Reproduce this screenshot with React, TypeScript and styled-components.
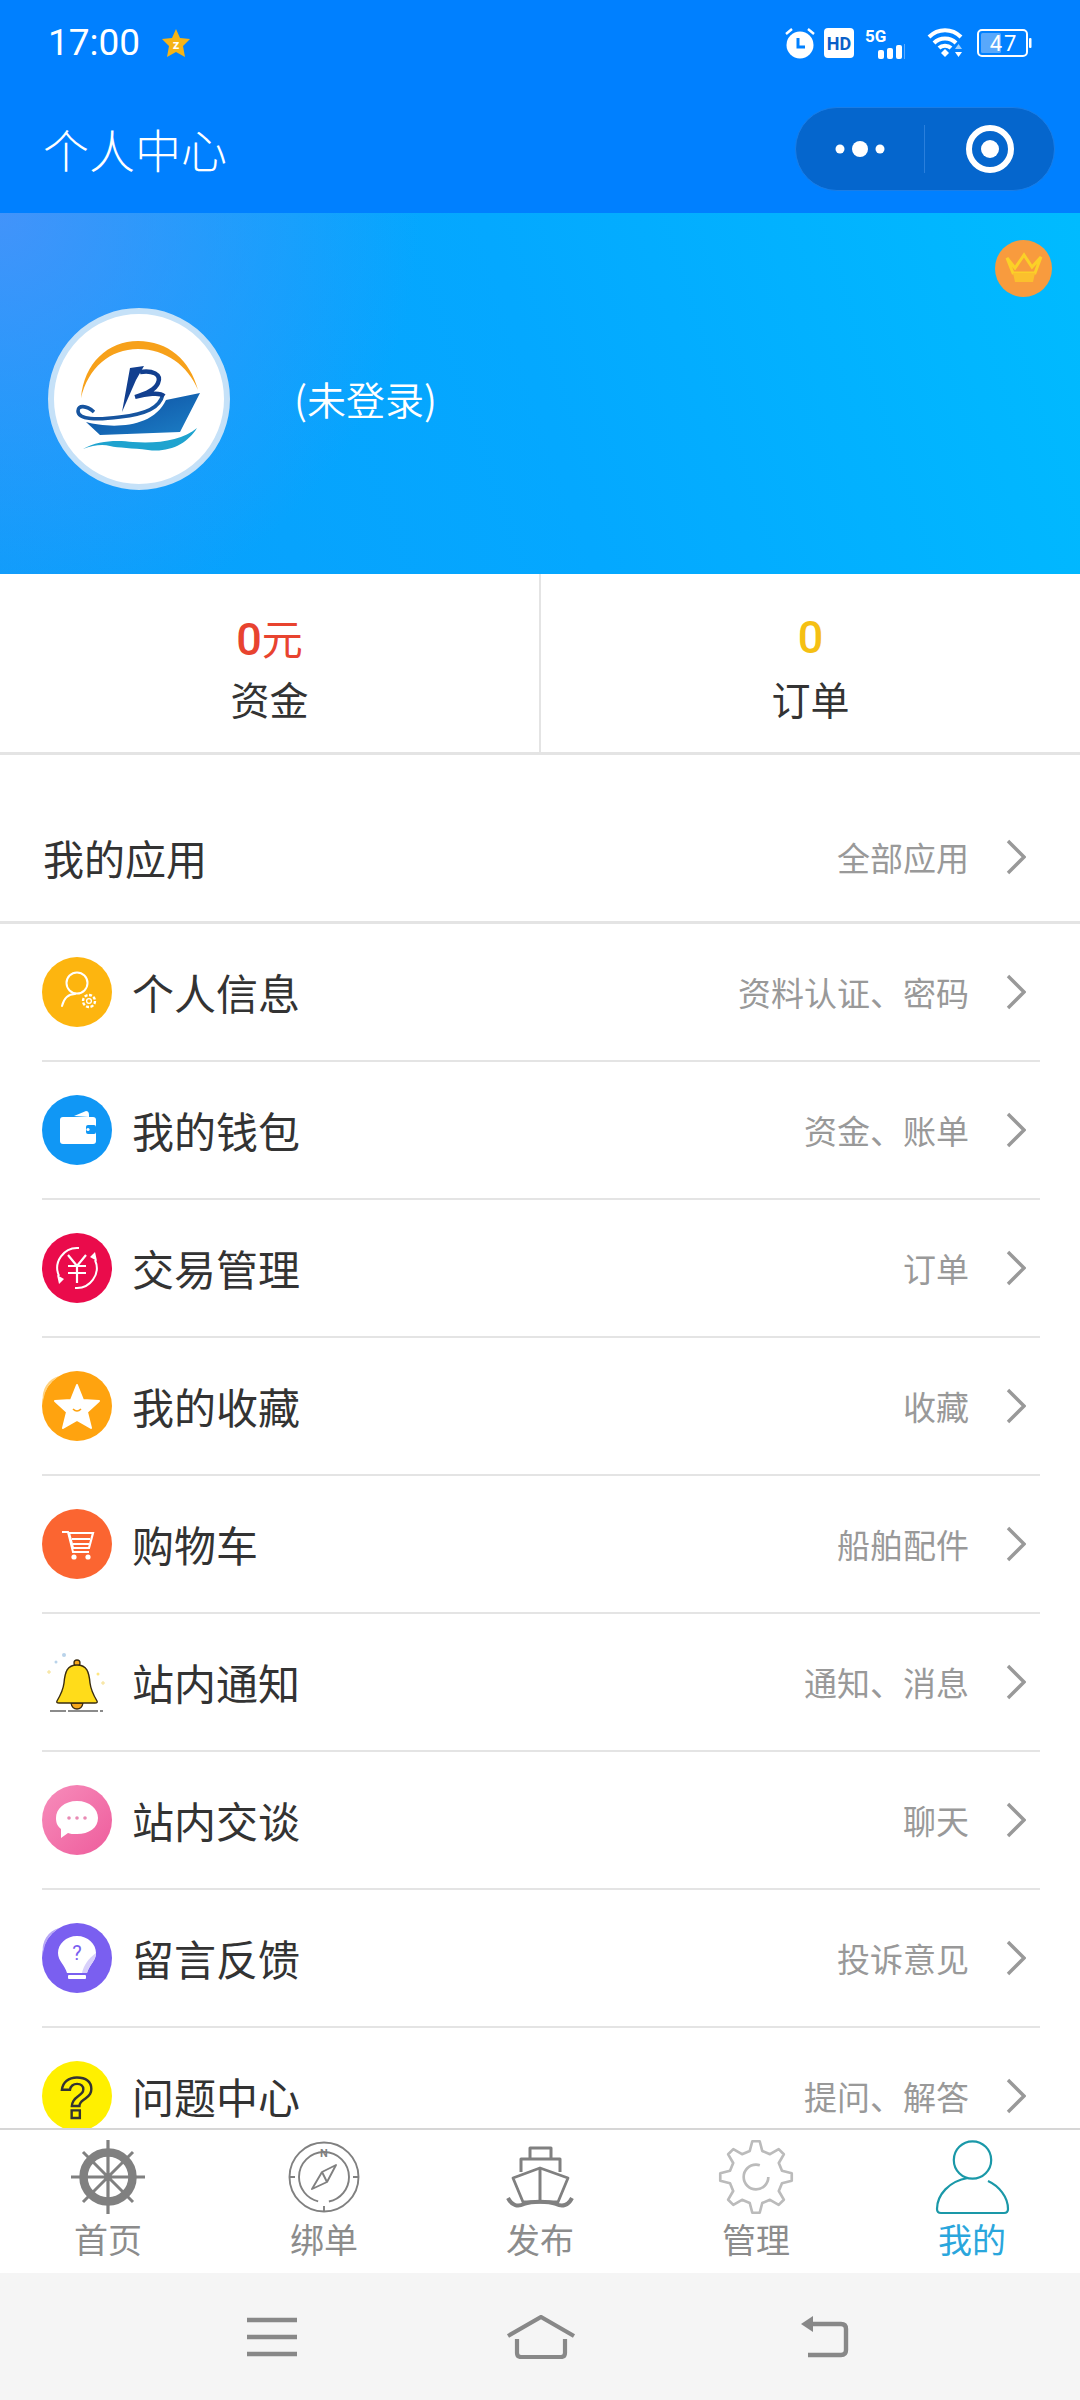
import React from 'react';
import styled, { createGlobalStyle } from 'styled-components';

const GlobalStyle = createGlobalStyle`
  html, body { margin: 0; padding: 0; background: #fff; }
  * { box-sizing: border-box; }
  body { font-family: "Noto Sans CJK SC", "Noto Sans", sans-serif; }
`;

const Page = styled.div`
  width: 1080px; height: 2400px; display: flex; flex-direction: column; overflow: hidden; background: #fff;
`;
const Top = styled.header`
  height: 213px; flex: none; background: #0080ff; color: #fff; display: flex; flex-direction: column;
`;
const StatusBar = styled.div`
  height: 85px; padding: 0 48px; display: flex; align-items: center; justify-content: space-between;
`;
const StatusLeft = styled.div`
  display: flex; align-items: center; gap: 21px;
`;
const Time = styled.span`
  font-family: Roboto, "Liberation Sans", sans-serif; font-size: 37px; font-weight: 400; line-height: 1;
`;
const StatusRight = styled.div`
  display: flex; align-items: center;
`;
const StatusGlyph = styled.svg<{ $ml?: number }>`
  display: block; flex: none; margin-left: ${p => p.$ml ?? 0}px;
`;
const NavBar = styled.div`
  height: 128px; padding: 0 25px 0 43px; display: flex; align-items: center; justify-content: space-between;
`;
const NavTitle = styled.h1`
  margin: -2px 0 0; font-size: 46px; font-weight: 300; line-height: 1;
`;
const Capsule = styled.div`
  width: 260px; height: 84px; border-radius: 42px; background: #0566cd; border: 1px solid #1a7de6;
  display: grid; grid-template-columns: 128px 1px 1fr; align-items: center; justify-items: center;
`;
const CapsuleDivider = styled.i`
  display: block; width: 1px; height: 48px; background: #2a7fdc;
`;
const Hero = styled.section`
  height: 361px; flex: none; position: relative; display: flex; align-items: center; padding: 11px 0 0 48px; gap: 64px;
  background:
    radial-gradient(circle at 0 0, rgba(72, 146, 250, 0.9) 0, rgba(72, 146, 250, 0) 420px),
    linear-gradient(72deg, #0a9efb 0%, #04a8ff 50%, #00bbff 100%);
`;
const Avatar = styled.div`
  width: 182px; height: 182px; border-radius: 50%; background: #fff; border: 6px solid #c5e1f8; flex: none;
  display: flex; align-items: center; justify-content: center; overflow: hidden;
`;
const LoginText = styled.span`
  color: #fff; font-size: 39px; font-weight: 350; line-height: 1; margin-top: -1px;
`;
const Crown = styled.svg`
  position: absolute; right: 28px; top: 27px;
`;
const Stats = styled.section`
  height: 181px; flex: none; display: grid; grid-template-columns: 1fr 2px 1fr; border-bottom: 3px solid #e4e4e4;
`;
const StatDivider = styled.i`
  display: block; background: #e4e4e4;
`;
const Stat = styled.div`
  display: flex; flex-direction: column; align-items: center; padding-top: 33px;
`;
const StatValue = styled.div<{ $color: string }>`
  color: ${p => p.$color}; height: 61px; line-height: 61px; font-size: 45px; font-weight: 500; font-family: Roboto, "Noto Sans CJK SC", sans-serif;
  span { font-size: 41px; font-weight: 400; font-family: "Noto Sans CJK SC", sans-serif; }
`;
const StatLabel = styled.div`
  color: #333; height: 61px; line-height: 61px; font-size: 39px; font-weight: 400;
`;
const Scroll = styled.main`
  flex: 1; min-height: 0; overflow: hidden; background: #fff;
`;
const AppsHeader = styled.div`
  height: 169px; padding: 38px 54px 0 43px; display: flex; align-items: center; justify-content: space-between;
  border-bottom: 3px solid #e4e4e4;
`;
const AppsTitle = styled.span`
  font-size: 41px; color: #333; line-height: 1;
`;
const Right = styled.div`
  display: flex; align-items: center; gap: 37px; flex: none;
`;
const Sub = styled.span`
  font-size: 33px; color: #999; line-height: 1; font-weight: 400;
`;
const Row = styled.div`
  height: 138px; margin: 0 40px 0 42px; padding-right: 14px; display: flex; align-items: center;
  border-bottom: 2px solid #e4e4e4;
`;
const RowIcon = styled.svg`
  display: block; flex: none; width: 70px; height: 70px;
`;
const RowTitle = styled.span`
  flex: 1; margin-left: 20px; font-size: 42px; color: #333; line-height: 1;
`;
const TabBar = styled.nav`
  height: 145px; flex: none; display: grid; grid-template-columns: repeat(5, 216px); background: #fff; border-top: 2px solid #d6d6d6;
`;
const Tab = styled.div`
  display: flex; flex-direction: column; align-items: center; padding-top: 9px;
`;
const TabLabel = styled.span<{ $active?: boolean }>`
  margin-top: 4px; font-size: 34px; line-height: 40px; font-weight: 400; color: ${p => (p.$active ? '#2aa6dc' : '#8c8c8c')};
`;
const SystemNav = styled.div`
  height: 127px; flex: none; background: #f5f5f5; display: flex; align-items: center; padding: 0 0 0 246px;
`;

const Chevron = () => (
  <svg width="20" height="36" viewBox="0 0 20 36" style={{ display: 'block' }}>
    <path d="M2 2 L18 18 L2 34" fill="none" stroke="#999" strokeWidth="3.4" />
  </svg>
);

const Logo = () => (
  <svg width="170" height="170" viewBox="6 6 170 170">
    <defs>
      <linearGradient id="hull" x1="0" y1="0" x2="1" y2="1">
        <stop offset="0" stopColor="#0c4a9e" />
        <stop offset="1" stopColor="#1c7fc6" />
      </linearGradient>
    </defs>
    <path d="M33 90 C36 55 60 33 90 33 C120 33 142 52 150 82 C140 58 118 41 90 41 C62 41 40 60 33 90Z" fill="#f7a11a" />
    <path d="M118 92 L152 85 L132 124 L52 127 L38 114 C60 120 104 122 118 92Z" fill="url(#hull)" />
    <path d="M115 86 C112 100 98 106 72 109 C50 112 30 112 30 103 C30 97 38 97 46 104" fill="none" stroke="#16549f" strokeWidth="3.6" />
    <path d="M82 60 L96 58 L88 72 L74 104Z" fill="#123f8f" />
    <path d="M92 64 C104 62 114 66 110 75 C107 82 98 86 87 89 C98 86 112 84 116 88" fill="none" stroke="#123f8f" strokeWidth="4.4" />
    <path d="M35 141 C50 132 70 132 85 134 C110 136 135 132 149 120 C140 135 122 145 100 142 C85 140 70 140 62 138 C55 136 45 137 35 141Z" fill="#1fa3cf" />
  </svg>
);

const UserIcon = () => (
  <RowIcon viewBox="0 0 70 70">
    <circle cx="35" cy="35" r="35" fill="#fdb50f" />
    <circle cx="35" cy="26" r="10.5" fill="none" stroke="#fff" strokeWidth="2" />
    <path d="M20 49 C22 41 27 37 33 37" fill="none" stroke="#fff" strokeWidth="2" strokeLinecap="round" />
    <circle cx="47" cy="44" r="6" fill="none" stroke="#fff" strokeWidth="2.4" strokeDasharray="3 1.6" />
    <circle cx="47" cy="44" r="2.4" fill="none" stroke="#fff" strokeWidth="1.3" />
  </RowIcon>
);
const WalletIcon = () => (
  <RowIcon viewBox="0 0 70 70">
    <circle cx="35" cy="35" r="35" fill="#1097f5" />
    <path d="M32 21 L44 16 Q47 16 47 20 L47 22Z" fill="#fff" />
    <rect x="18" y="22" width="36" height="27" rx="3" fill="#fff" />
    <rect x="44" y="30" width="10" height="9" rx="2" fill="#1097f5" />
    <circle cx="46" cy="34.5" r="1.6" fill="#fff" />
  </RowIcon>
);
const TradeIcon = () => (
  <RowIcon viewBox="0 0 70 70">
    <circle cx="35" cy="35" r="35" fill="#ea0b4b" />
    <path d="M53 27 A20 20 0 0 1 33 55 M17 43 A20 20 0 0 1 37 15" fill="none" stroke="#fff" strokeWidth="2" />
    <path d="M48 24 L53 19 L55 28Z M22 46 L17 51 L15 42Z" fill="#fff" />
    <path d="M26 22 L35 33 L44 22 M26 33 H44 M26 40 H44 M35 33 V50" fill="none" stroke="#fff" strokeWidth="2.2" />
  </RowIcon>
);
const StarIcon = () => (
  <RowIcon viewBox="0 0 70 70">
    <circle cx="35" cy="35" r="35" fill="#ffa30f" />
    <path d="M1 30 A35 35 0 0 1 17 5 A22 22 0 0 0 1 30Z" fill="#ffd27f" />
    <path d="M35 14 L41 29 L57 30 L45 41 L49 57 L35 49 L21 57 L25 41 L13 30 L29 29Z" fill="#fff" stroke="#fff" strokeWidth="2" strokeLinejoin="round" />
    <path d="M31 38 Q35 42 39 38" fill="none" stroke="#ffa30f" strokeWidth="1.6" />
  </RowIcon>
);
const CartIcon = () => (
  <RowIcon viewBox="0 0 70 70">
    <circle cx="35" cy="35" r="35" fill="#fb6531" />
    <path d="M20 23 H26 L31 43 H47" fill="none" stroke="#fff" strokeWidth="2" />
    <path d="M27 24 H51 L47 39 H31Z M30 30 H48 M31 35 H47" fill="none" stroke="#fff" strokeWidth="2.2" />
    <circle cx="32" cy="48" r="2.6" fill="#fff" />
    <circle cx="46" cy="48" r="2.6" fill="#fff" />
  </RowIcon>
);
const BellIcon = () => (
  <RowIcon viewBox="0 0 70 70">
    <circle cx="14" cy="15" r="1.5" fill="#b9d3ea" />
    <circle cx="22" cy="8" r="2" fill="#b9d3ea" />
    <path d="M5 25 h4 M7 23 v4" stroke="#f5df8c" strokeWidth="1" />
    <path d="M59 36 h4 M61 34 v4" stroke="#f5df8c" strokeWidth="1" />
    <circle cx="56" cy="27" r="1.5" fill="#ffe680" />
    <path d="M29 56 H41 Q40 62 35 62 Q30 62 29 56Z" fill="#f6a81c" stroke="#3a2c10" strokeWidth="1.3" />
    <circle cx="35" cy="16" r="3" fill="#f6a81c" stroke="#3a2c10" strokeWidth="1.3" />
    <path d="M35 18 C45 18 47 25 48 36 C49 44 52 49 55 54 Q56 56 53 56 H17 Q14 56 15 54 C18 49 21 44 22 36 C23 25 25 18 35 18Z" fill="#ffdc1a" stroke="#3a2c10" strokeWidth="1.4" />
    <path d="M8 64 H61" stroke="#666" strokeWidth="1.4" strokeDasharray="16 2 30 2" />
  </RowIcon>
);
const ChatIcon = () => (
  <RowIcon viewBox="0 0 70 70">
    <defs>
      <linearGradient id="pink" x1="0" y1="0" x2="1" y2="1">
        <stop offset="0" stopColor="#f78dbb" />
        <stop offset="1" stopColor="#ee5c9c" />
      </linearGradient>
    </defs>
    <circle cx="35" cy="35" r="35" fill="url(#pink)" />
    <path d="M35 16 C48 16 56 24 56 33 C56 43 47 49 35 49 C31 49 28 49 26 48 L19 53 L19 44 C15 41 14 37 14 33 C14 24 22 16 35 16Z" fill="#fff" />
    <circle cx="27" cy="33" r="1.8" fill="#e98ab4" />
    <circle cx="35" cy="33" r="1.8" fill="#e98ab4" />
    <circle cx="43" cy="33" r="1.8" fill="#e98ab4" />
  </RowIcon>
);
const BulbIcon = () => (
  <RowIcon viewBox="0 0 70 70">
    <circle cx="35" cy="35" r="35" fill="#7a5ff0" />
    <path d="M1 30 A35 35 0 0 1 17 5 A22 22 0 0 0 1 30Z" fill="#b8a8f6" />
    <path d="M35 13 C46 13 54 21 54 30 C54 38 47 42 45 50 H25 C23 42 16 38 16 30 C16 21 24 13 35 13Z" fill="#fff" />
    <path d="M54 30 C54 38 47 42 45 50 H40 C42 42 46 36 54 30Z" fill="#d8d0fa" />
    <rect x="26" y="52" width="18" height="4" rx="1" fill="#fff" />
    <text x="35" y="37" textAnchor="middle" fontSize="20" fontFamily="Roboto, sans-serif" fill="#7a5ff0">?</text>
  </RowIcon>
);
const QuestionIcon = () => (
  <RowIcon viewBox="0 0 70 70">
    <circle cx="35" cy="35" r="35" fill="#fff000" />
    <text x="35" y="57" textAnchor="middle" fontSize="58" fontWeight="700" fontFamily="Liberation Sans, sans-serif" fill="#fff000" stroke="#333" strokeWidth="2.4">?</text>
  </RowIcon>
);

const rows = [
  { title: '个人信息', sub: '资料认证、密码', icon: <UserIcon /> },
  { title: '我的钱包', sub: '资金、账单', icon: <WalletIcon /> },
  { title: '交易管理', sub: '订单', icon: <TradeIcon /> },
  { title: '我的收藏', sub: '收藏', icon: <StarIcon /> },
  { title: '购物车', sub: '船舶配件', icon: <CartIcon /> },
  { title: '站内通知', sub: '通知、消息', icon: <BellIcon /> },
  { title: '站内交谈', sub: '聊天', icon: <ChatIcon /> },
  { title: '留言反馈', sub: '投诉意见', icon: <BulbIcon /> },
  { title: '问题中心', sub: '提问、解答', icon: <QuestionIcon /> },
];

const gearPath = (() => {
  const pts: string[] = [];
  const teeth = 8;
  for (let i = 0; i < teeth; i++) {
    const a = (i / teeth) * Math.PI * 2 - Math.PI / 2;
    const step = (Math.PI * 2) / teeth;
    const list: [number, number][] = [
      [26, a - step * 0.3], [35, a - step * 0.13], [35, a + step * 0.13], [26, a + step * 0.3],
    ];
    list.forEach(([r, t]) => pts.push(`${(37 + r * Math.cos(t)).toFixed(1)} ${(37 + r * Math.sin(t)).toFixed(1)}`));
  }
  return `M${pts.join(' L')}Z`;
})();

const WheelTab = () => (
  <svg width="76" height="76" viewBox="0 0 76 76">
    <g stroke="#808080" fill="none">
      <path d="M38 1 V75 M1 38 H75" strokeWidth="3.2" />
      <path d="M38 38 L63 63 M38 38 L13 13 M38 38 L63 13 M38 38 L13 63" strokeWidth="3" />
      <circle cx="38" cy="38" r="24.5" strokeWidth="8.5" />
    </g>
    <circle cx="38" cy="38" r="4" fill="#808080" />
  </svg>
);
const CompassTab = () => (
  <svg width="76" height="76" viewBox="0 0 76 76">
    <g fill="none" stroke="#808080" strokeWidth="1.9">
      <circle cx="38" cy="38" r="34.5" />
      <circle cx="38" cy="38" r="25" strokeDasharray="146 11" strokeDashoffset="-45" />
      <path d="M3.5 38 H9 M67 38 H72.5 M38 67 V72.5" />
      <path d="M50 26 L41 43 L26 50 L36 33Z M36 33 L41 43" strokeLinejoin="round" />
    </g>
    <text x="38" y="18" textAnchor="middle" fontSize="11" fontWeight="700" fontFamily="Roboto, sans-serif" fill="#808080">N</text>
  </svg>
);
const ShipTab = () => (
  <svg width="76" height="76" viewBox="0 0 76 76">
    <g fill="none" stroke="#808080" strokeWidth="3" strokeLinejoin="round">
      <path d="M28 19 V9 H49 V19" />
      <path d="M19 33 V20 H58 V33" />
      <path d="M38 29 L66 39 L56 63 H21 L11 39Z" strokeWidth="2.8" fill="#fff" />
      <path d="M38 29 V63" />
    </g>
    <path d="M6 59 C10 67 16 68 22 65 C30 62 46 62 54 65 C60 68 66 67 70 59" fill="none" stroke="#808080" strokeWidth="4" />
  </svg>
);
const GearTab = () => (
  <svg width="76" height="76" viewBox="0 0 74 74">
    <path d={gearPath} fill="none" stroke="#bbb" strokeWidth="2.6" strokeLinejoin="round" />
    <circle cx="37" cy="37" r="12" fill="none" stroke="#bbb" strokeWidth="2.6" strokeDasharray="60 15.4" />
  </svg>
);
const UserTab = () => (
  <svg width="76" height="76" viewBox="0 0 76 76">
    <g fill="none" stroke="#1a98a8" strokeWidth="2.2">
      <circle cx="38.5" cy="21" r="18.7" />
      <path d="M34 39 C15 42 3 56 3 70 Q3 74 7 74 H70 Q74 74 74 70 C74 58 65 47 54 42" />
    </g>
  </svg>
);

const tabs = [
  { label: '首页', icon: <WheelTab /> },
  { label: '绑单', icon: <CompassTab /> },
  { label: '发布', icon: <ShipTab /> },
  { label: '管理', icon: <GearTab /> },
  { label: '我的', icon: <UserTab />, active: true },
];

export default function App() {
  return (
    <Page>
      <GlobalStyle />
      <Top>
        <StatusBar>
          <StatusLeft>
            <Time>17:00</Time>
            <svg width="30" height="30" viewBox="0 0 30 30" style={{ display: 'block' }}>
              <path d="M15 1 L19 10 L29 11 L22 18 L24 29 L15 24 L6 29 L8 18 L1 11 L11 10Z" fill="#f5b417" />
              <text x="15" y="21" textAnchor="middle" fontSize="13" fontWeight="700" fontFamily="Roboto, sans-serif" fill="#fff">z</text>
            </svg>
          </StatusLeft>
          <StatusRight>
            <StatusGlyph width="32" height="32" viewBox="0 0 32 32">
              <path d="M2 7 L8 2 M30 7 L24 2" stroke="#fff" strokeWidth="2.4" />
              <circle cx="16" cy="18" r="13.5" fill="#fff" />
              <path d="M14 11 V20 H21" fill="none" stroke="#0080ff" strokeWidth="3" />
            </StatusGlyph>
            <StatusGlyph $ml={8} width="30" height="30" viewBox="0 0 30 30">
              <rect width="30" height="30" rx="4" fill="#fff" />
              <text x="15" y="22" textAnchor="middle" fontSize="18" fontWeight="700" fontFamily="Roboto, sans-serif" fill="#0a5fc8">HD</text>
            </StatusGlyph>
            <StatusGlyph $ml={11} width="40" height="32" viewBox="0 0 40 32">
              <text x="0" y="15" fontSize="17" fontWeight="700" fontFamily="Roboto, sans-serif" fill="#fff">5G</text>
              <rect x="13" y="23" width="6" height="9" rx="2" fill="#fff" />
              <rect x="22" y="21" width="6" height="11" rx="2" fill="#fff" />
              <rect x="31" y="18" width="6" height="14" rx="2" fill="#fff" />
              <rect x="39" y="17" width="1" height="15" fill="#5aa9ff" />
            </StatusGlyph>
            <StatusGlyph $ml={22} width="36" height="30" viewBox="0 0 36 30">
              <path d="M2 9 C11 0 25 0 34 9 M7 15 C13 9 23 9 29 15 M12 20 C15 17 21 17 24 20" fill="none" stroke="#fff" strokeWidth="4" />
              <path d="M14 25 L18 21 L22 25 L18 29Z" fill="#fff" />
              <path d="M28 21 L31.5 16 L35 21Z" fill="#9fd0ff" />
              <path d="M28 24 L35 24 L31.5 29Z" fill="#fff" />
            </StatusGlyph>
            <StatusGlyph $ml={14} width="55" height="28" viewBox="0 0 55 28">
              <rect x="1" y="1" width="49" height="26" rx="4" fill="none" stroke="#fff" strokeWidth="2" />
              <rect x="4" y="4" width="20" height="20" rx="1.5" fill="#59a8fb" />
              <rect x="52" y="9" width="2.5" height="10" rx="1" fill="#fff" />
              <text x="27" y="22" textAnchor="middle" fontSize="22" fontFamily="Roboto, sans-serif" letterSpacing="2" fill="#fff">47</text>
            </StatusGlyph>
          </StatusRight>
        </StatusBar>
        <NavBar>
          <NavTitle>个人中心</NavTitle>
          <Capsule>
            <svg width="60" height="20" viewBox="0 0 60 20" style={{ display: 'block' }}>
              <circle cx="10" cy="10" r="4.5" fill="#fff" />
              <circle cx="30" cy="10" r="8" fill="#fff" />
              <circle cx="50" cy="10" r="4.5" fill="#fff" />
            </svg>
            <CapsuleDivider />
            <svg width="48" height="48" viewBox="0 0 48 48" style={{ display: 'block' }}>
              <circle cx="24" cy="24" r="21" fill="none" stroke="#fff" strokeWidth="6" />
              <circle cx="24" cy="24" r="9" fill="#fff" />
            </svg>
          </Capsule>
        </NavBar>
      </Top>
      <Hero>
        <Avatar><Logo /></Avatar>
        <LoginText>(未登录)</LoginText>
        <Crown width="57" height="57" viewBox="0 0 57 57">
          <circle cx="28.5" cy="28.5" r="28.5" fill="#f89b3e" />
          <path d="M12 18 L20 28 L29 15 L37 27 L46 17 L40 33 L18 33Z" fill="none" stroke="#fbd027" strokeWidth="3" />
          <path d="M18 33 H40 L38 42 H20Z" fill="#fbc02d" />
        </Crown>
      </Hero>
      <Stats>
        <Stat>
          <StatValue $color="#e8432f">0<span>元</span></StatValue>
          <StatLabel>资金</StatLabel>
        </Stat>
        <StatDivider />
        <Stat>
          <StatValue $color="#f5c013">0</StatValue>
          <StatLabel>订单</StatLabel>
        </Stat>
      </Stats>
      <Scroll>
        <AppsHeader>
          <AppsTitle>我的应用</AppsTitle>
          <Right><Sub>全部应用</Sub><Chevron /></Right>
        </AppsHeader>
        {rows.map(r => (
          <Row key={r.title}>
            {r.icon}
            <RowTitle>{r.title}</RowTitle>
            <Right><Sub>{r.sub}</Sub><Chevron /></Right>
          </Row>
        ))}
      </Scroll>
      <TabBar>
        {tabs.map(t => (
          <Tab key={t.label}>
            {t.icon}
            <TabLabel $active={t.active}>{t.label}</TabLabel>
          </Tab>
        ))}
      </TabBar>
      <SystemNav>
        <StatusGlyph width="52" height="42" viewBox="0 0 52 42">
          <path d="M1 4 H51 M1 21 H51 M1 38 H51" stroke="#888" strokeWidth="4.6" />
        </StatusGlyph>
        <StatusGlyph $ml={208} width="70" height="44" viewBox="0 0 70 44">
          <path d="M2 21 L35 2 L68 21" fill="none" stroke="#888" strokeWidth="4.2" />
          <path d="M11 24 V38 Q11 42 15 42 H55 Q59 42 59 38 V24" fill="none" stroke="#888" strokeWidth="4.2" />
        </StatusGlyph>
        <StatusGlyph $ml={223} width="50" height="44" viewBox="0 0 50 44">
          <path d="M2 9 L14 1 V17Z" fill="#888" />
          <path d="M8 9 H42 Q47 9 47 14 V35 Q47 40 42 40 H9" fill="none" stroke="#888" strokeWidth="4.4" />
        </StatusGlyph>
      </SystemNav>
    </Page>
  );
}
